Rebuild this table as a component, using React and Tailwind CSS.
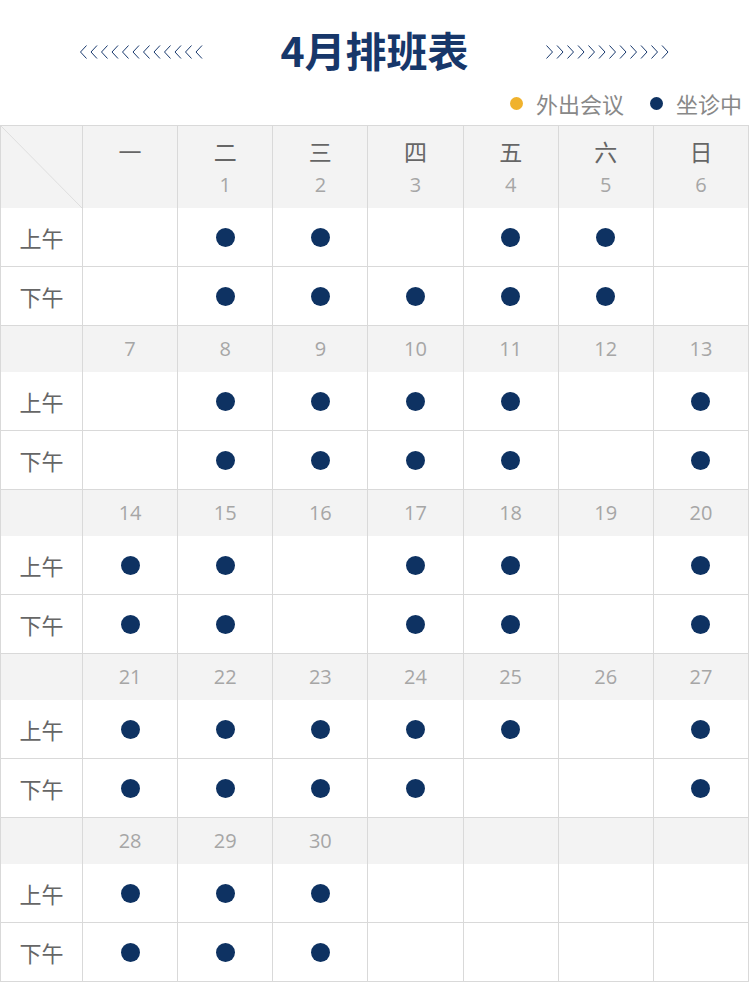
import React from 'react';

const weeks = [
  {
    days: ['', '1', '2', '3', '4', '5', '6'],
    am: [0, 1, 1, 0, 1, 1, 0],
    pm: [0, 1, 1, 1, 1, 1, 0],
  },
  {
    days: ['7', '8', '9', '10', '11', '12', '13'],
    am: [0, 1, 1, 1, 1, 0, 1],
    pm: [0, 1, 1, 1, 1, 0, 1],
  },
  {
    days: ['14', '15', '16', '17', '18', '19', '20'],
    am: [1, 1, 0, 1, 1, 0, 1],
    pm: [1, 1, 0, 1, 1, 0, 1],
  },
  {
    days: ['21', '22', '23', '24', '25', '26', '27'],
    am: [1, 1, 1, 1, 1, 0, 1],
    pm: [1, 1, 1, 1, 0, 0, 1],
  },
  {
    days: ['28', '29', '30', '', '', '', ''],
    am: [1, 1, 1, 0, 0, 0, 0],
    pm: [1, 1, 1, 0, 0, 0, 0],
  },
];

const weekdays = ['一', '二', '三', '四', '五', '六', '日'];

const cjk = "font-['Noto_Sans_CJK_SC',sans-serif]";
const num = "font-['Open_Sans','Noto_Sans_CJK_SC',sans-serif]";

const Chevrons = ({ dir }) => (
  <svg width="126" height="16" viewBox="0 0 126 16" fill="none" stroke="#1a3a6e" strokeWidth="1">
    {Array.from({ length: 12 }).map((_, i) => {
      const x = i * 10.5 + 1;
      const pts = dir === 'left'
        ? `${x + 6.5},1.5 ${x + 0.5},8 ${x + 6.5},14.5`
        : `${x + 0.5},1.5 ${x + 6.5},8 ${x + 0.5},14.5`;
      return <polyline key={i} points={pts} />;
    })}
  </svg>
);

const Dot = () => <span className="block w-[19px] h-[19px] rounded-full bg-[#0e3262]" />;

const SlotRow = ({ label, marks }) => (
  <>
    <div className={`h-[59px] flex items-center justify-center border-r border-b border-[#d9d9d9] text-[22px] text-[#666] ${cjk}`}>
      {label}
    </div>
    {marks.map((m, i) => (
      <div key={i} className="h-[59px] flex items-center justify-center border-r border-b border-[#d9d9d9]">
        {m ? <Dot /> : null}
      </div>
    ))}
  </>
);

export default function App() {
  return (
    <div className="w-[749px] bg-white">
      {/* Title */}
      <div className="h-[84px] pt-[20px] flex items-center justify-center gap-[73px]">
        <Chevrons dir="left" />
        <h1 className={`w-[194px] pb-[6px] text-center text-[41px] leading-[64px] font-bold text-[#17376a] ${cjk}`}>4月排班表</h1>
        <Chevrons dir="right" />
      </div>

      {/* Legend */}
      <div className={`h-[41px] pb-[3px] pr-[7px] flex items-center justify-end text-[22px] text-[#888] ${cjk}`}>
        <span className="w-[13px] h-[13px] rounded-full bg-[#f0b22d] mr-[13px]" />
        <span>外出会议</span>
        <span className="w-[13px] h-[13px] rounded-full bg-[#0e3262] ml-[26px] mr-[13px]" />
        <span>坐诊中</span>
      </div>

      {/* Schedule */}
      <div className="grid grid-cols-[82px_repeat(7,1fr)] border-t border-l border-[#d9d9d9]">
        {weeks.map((w, wi) => (
          <React.Fragment key={wi}>
            {wi === 0 ? (
              <>
                <div className="relative h-[82px] bg-[#f3f3f3] border-r border-[#d9d9d9]">
                  <svg className="absolute inset-0 w-full h-full" preserveAspectRatio="none" viewBox="0 0 100 100">
                    <line x1="0" y1="0" x2="100" y2="100" stroke="#dedede" strokeWidth="1" vectorEffect="non-scaling-stroke" />
                  </svg>
                </div>
                {weekdays.map((d, i) => (
                  <div key={i} className="h-[82px] bg-[#f3f3f3] border-r border-[#d9d9d9] flex flex-col items-center pt-[10px]">
                    <span className={`text-[23px] leading-[30px] text-[#666] ${cjk}`}>{d}</span>
                    <span className={`text-[20px] leading-[26px] mt-[6px] text-[#a6a6a6] ${num}`}>{w.days[i]}</span>
                  </div>
                ))}
              </>
            ) : (
              <>
                <div className="h-[46px] bg-[#f3f3f3] border-r border-[#d9d9d9]" />
                {w.days.map((d, i) => (
                  <div key={i} className={`h-[46px] bg-[#f3f3f3] border-r border-[#d9d9d9] flex items-center justify-center text-[20px] text-[#a6a6a6] ${num}`}>
                    {d}
                  </div>
                ))}
              </>
            )}
            <SlotRow label="上午" marks={w.am} />
            <SlotRow label="下午" marks={w.pm} />
          </React.Fragment>
        ))}
      </div>
    </div>
  );
}
